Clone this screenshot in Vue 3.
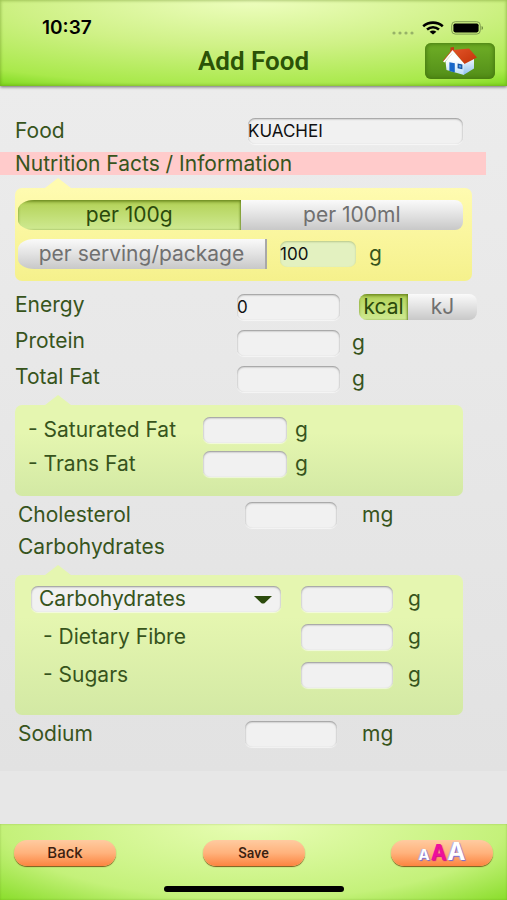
<script setup>
import { ref, reactive } from 'vue';

const basis = ref('100g');
const energyUnit = ref('kcal');
const carbType = ref('Carbohydrates');

const food = reactive({
    name: 'KUACHEI',
    serving: '100',
    energy: '0',
    protein: '',
    totalFat: '',
    saturatedFat: '',
    transFat: '',
    cholesterol: '',
    carbs: '',
    fibre: '',
    sugars: '',
    sodium: ''
});

const mainRows = [
    { key: 'protein', label: 'Protein' },
    { key: 'totalFat', label: 'Total Fat' }
];
const fatRows = [
    { key: 'saturatedFat', label: '- Saturated Fat' },
    { key: 'transFat', label: '- Trans Fat' }
];
const carbRows = [
    { key: 'fibre', label: '- Dietary Fibre' },
    { key: 'sugars', label: '- Sugars' }
];
</script>

<template>
    <div class="page">
        <header class="top-bar">
            <div class="status">
                <span class="time">10:37</span>
                <div class="status-icons">
                    <svg class="dots" width="24" height="12" viewBox="0 0 24 12">
                        <circle v-for="n in 4" :key="n" :cx="n * 6 - 3" cy="8" r="1.6" />
                    </svg>
                    <svg width="22" height="14" viewBox="0 0 22 14">
                        <g fill="none" stroke="#000" stroke-width="2.6">
                            <path d="M1.2 5.2C6.8 0.4 15.2 0.4 20.8 5.2" />
                            <path d="M5 8.6C8.6 5.6 13.4 5.6 17 8.6" />
                        </g>
                        <path d="M7.6 10.8C9.8 9.2 12.2 9.2 14.4 10.8L11 13.6Z" />
                    </svg>
                    <svg width="33" height="14" viewBox="0 0 33 14">
                        <rect x="0.7" y="0.7" width="28.6" height="12.4" rx="3.6" fill="none" stroke="#7f9a50" />
                        <rect x="2.4" y="2.4" width="25.2" height="9" rx="1.8" />
                        <path d="M30.6 5C32.4 5.6 32.4 8.4 30.6 9Z" fill="#66803a" />
                    </svg>
                </div>
            </div>
            <div class="title-row">
                <h1>Add Food</h1>
                <button class="home" type="button" aria-label="Home">
                    <svg width="36" height="30" viewBox="0 0 36 30">
                        <defs>
                            <linearGradient id="wallFront" x1="0" y1="0" x2="0" y2="1">
                                <stop offset="0.3" stop-color="#ffffff" />
                                <stop offset="1" stop-color="#b9dcf8" />
                            </linearGradient>
                            <linearGradient id="wallSide" x1="0" y1="0" x2="0" y2="1">
                                <stop offset="0" stop-color="#f2f8ff" />
                                <stop offset="1" stop-color="#8fc0ee" />
                            </linearGradient>
                            <linearGradient id="roof" x1="0" y1="0" x2="1" y2="1">
                                <stop offset="0" stop-color="#e2542a" />
                                <stop offset="1" stop-color="#c23206" />
                            </linearGradient>
                        </defs>
                        <path d="M8.4 1.6L12 1V6L8.4 9Z" fill="#c43a16" />
                        <path d="M3.5 15.5L10.6 7L22 17V29L4.5 24Z" fill="url(#wallFront)" />
                        <path d="M21.5 17L32 12.5V22.5L21.5 29Z" fill="url(#wallSide)" />
                        <path d="M10.4 4L27 2.4L35 11.6L22.4 18Z" fill="url(#roof)" />
                        <path d="M10.4 4L22.4 18L20.8 18.4L10.4 7.4L2.4 16.4L1 15.4Z" fill="#fbfdff" />
                        <path d="M10.4 4L1 15.4L1 14.6L10.2 3.2Z" fill="#d8481e" />
                        <path d="M7.4 16.2L12.8 17.2V26.4L7.4 25Z" fill="#1766c8" />
                        <path d="M15.6 17.6L20.4 18.6V23.2L15.6 22.2Z" fill="#14509e" />
                        <path d="M16.8 19L19.2 19.5V21.8L16.8 21.3Z" fill="#4f9be6" />
                    </svg>
                </button>
            </div>
        </header>

        <main>
            <form class="facts" @submit.prevent>
                <div class="row food-row">
                    <label for="name">Food</label>
                    <input id="name" v-model="food.name" type="text">
                </div>

                <h2>Nutrition Facts / Information</h2>

                <div class="panel yellow">
                    <div class="segment wide">
                        <button type="button" :class="{ on: basis == '100g' }" @click="basis = '100g'">per 100g</button>
                        <button type="button" :class="{ on: basis == '100ml' }" @click="basis = '100ml'">per 100ml</button>
                    </div>
                    <div class="serving-row">
                        <div class="segment serving">
                            <button type="button" :class="{ on: basis == 'serving' }" @click="basis = 'serving'">per serving/package</button>
                        </div>
                        <input id="serving" v-model="food.serving" class="tinted" type="text" aria-label="Serving size">
                        <span class="unit">g</span>
                    </div>
                </div>

                <div class="row">
                    <label for="energy">Energy</label>
                    <input id="energy" v-model="food.energy" type="text">
                    <div class="segment energy">
                        <button type="button" :class="{ on: energyUnit == 'kcal' }" @click="energyUnit = 'kcal'">kcal</button>
                        <button type="button" :class="{ on: energyUnit == 'kJ' }" @click="energyUnit = 'kJ'">kJ</button>
                    </div>
                </div>
                <div v-for="row in mainRows" :key="row.key" class="row">
                    <label :for="row.key">{{ row.label }}</label>
                    <input :id="row.key" v-model="food[row.key]" type="text">
                    <span class="unit">g</span>
                </div>

                <div class="panel green fat">
                    <div v-for="row in fatRows" :key="row.key" class="panel-row">
                        <label :for="row.key">{{ row.label }}</label>
                        <input :id="row.key" v-model="food[row.key]" type="text">
                        <span class="unit">g</span>
                    </div>
                </div>

                <div class="row minor">
                    <label for="cholesterol">Cholesterol</label>
                    <input id="cholesterol" v-model="food.cholesterol" type="text">
                    <span class="unit">mg</span>
                </div>
                <div class="row minor">
                    <label for="carbs">Carbohydrates</label>
                </div>

                <div class="panel green carbs">
                    <div class="panel-row">
                        <div class="picker">
                            <select v-model="carbType" aria-label="Carbohydrate type">
                                <option>Carbohydrates</option>
                                <option>Net Carbs</option>
                            </select>
                            <svg width="18" height="8" viewBox="0 0 18 8">
                                <path d="M0 0H18L10.5 7.2Q9 8 7.5 7.2Z" />
                            </svg>
                        </div>
                        <input id="carbs" v-model="food.carbs" type="text">
                        <span class="unit">g</span>
                    </div>
                    <div v-for="row in carbRows" :key="row.key" class="panel-row">
                        <label :for="row.key">{{ row.label }}</label>
                        <input :id="row.key" v-model="food[row.key]" type="text">
                        <span class="unit">g</span>
                    </div>
                </div>

                <div class="row minor">
                    <label for="sodium">Sodium</label>
                    <input id="sodium" v-model="food.sodium" type="text">
                    <span class="unit">mg</span>
                </div>
            </form>
        </main>

        <footer class="bottom-bar">
            <div class="actions">
                <button class="pill" type="button">Back</button>
                <button class="pill save" type="button">Save</button>
                <button class="pill sizes" type="button" aria-label="Text size">
                    <span class="small">A</span><span class="medium">A</span><span class="large">A</span>
                </button>
            </div>
            <div class="home-bar"></div>
        </footer>
    </div>
</template>

<style>
body {
    margin: 0;
    background: #e7e7e7;
}
</style>

<style scoped>
.page {
    display: flex;
    flex-direction: column;
    min-height: 100vh;
    color: #37541c;
    font-family: Inter, "Liberation Sans", sans-serif;
    font-size: 21px;
    line-height: 22px;
}

button, input, select {
    box-sizing: border-box;
    margin: 0;
    border: 0;
    padding: 0;
    color: inherit;
    font: inherit;
}

/* Bars */
.top-bar, .bottom-bar {
    box-sizing: border-box;
}

.top-bar {
    position: relative;
    height: 86px;
    padding-top: 17px;
    background: radial-gradient(ellipse 110% 130% at 50% 0, #eefebf, #cff186 42%, #a9e94b 77%, #7cd91c 90%);
    box-shadow: 0 1px 3px rgba(0, 0, 0, 0.55), inset 0 0 3px 1px rgba(90, 130, 20, 0.4);
}

.status {
    display: flex;
    justify-content: space-between;
    align-items: center;
    height: 22px;
    padding: 0 23px 0 42px;
}

.time {
    color: #000;
    font-size: 19px;
    font-weight: 600;
}

.status-icons {
    display: flex;
    align-items: center;
    gap: 7px;
}

.dots {
    fill: #97b268;
    margin-top: 6px;
}

.title-row {
    display: grid;
    grid-template-columns: 1fr auto 1fr;
    align-items: center;
    margin-top: 4px;
    padding: 0 12px;
}

h1 {
    grid-column: 2;
    margin: 0;
    color: #2b5207;
    font-family: Roboto, "Liberation Sans", sans-serif;
    font-size: 26px;
    font-weight: 600;
    line-height: 36px;
}

.home {
    display: grid;
    place-items: center;
    justify-self: end;
    width: 70px;
    height: 36px;
    border-radius: 6px;
    background: linear-gradient(#6fae26, #528e18);
    box-shadow: inset 0 0 4px 1px #46780f;
}

/* Form */
main {
    flex: 1;
}

.facts {
    padding: 32px 0 18px;
    background: linear-gradient(#ececec, #e2e2e2);
}

.row {
    display: grid;
    grid-template-columns: 1fr 103px 155px;
    column-gap: 12px;
    align-items: center;
    min-height: 26px;
    margin-bottom: 10px;
    padding-left: 15px;
}

.row label {
    align-self: start;
}

.row.food-row {
    grid-template-columns: 1fr 215px;
    margin-bottom: 8px;
    padding-right: 44px;
}

.food-row label, .minor label {
    align-self: center;
}

.row.minor {
    grid-template-columns: 1fr 92px 145px;
    column-gap: 25px;
    margin-bottom: 6px;
    padding-left: 18px;
}

input, select {
    width: 100%;
    height: 26px;
    border-radius: 7px;
    background: #f1f1f1;
    box-shadow: inset 0 1px 2px rgba(0, 0, 0, 0.4), 0 1px 1px rgba(255, 255, 255, 0.6);
}

input {
    color: #111;
    font-size: 17px;
}

h2 {
    margin: 0 21px 13px 0;
    padding-left: 15px;
    background: #ffcbcb;
    font-size: 21px;
    font-weight: 400;
    line-height: 23px;
}

.panel {
    position: relative;
    margin: 0 44px 6px 15px;
    border-radius: 7px;
}

.panel::before {
    content: '';
    position: absolute;
    left: 30px;
    bottom: 100%;
    border: solid transparent;
    border-width: 0 13px 10px;
}

.yellow {
    margin: 0 35px 13px 15px;
    padding: 12px 9px 12px 3px;
    background: linear-gradient(#fffbb0, #f5f18c);
}

.yellow::before {
    border-bottom-color: #fffbb0;
}

.green {
    background: linear-gradient(#e5f6b0 30%, #d3e9a4);
}

.green::before {
    border-bottom-color: #e5f6b0;
}

.panel-row {
    display: grid;
    grid-template-columns: 1fr 84px 168px;
    column-gap: 8px;
    align-items: center;
}

.fat {
    display: grid;
    gap: 8px;
    margin-top: 13px;
    padding: 12px 0 19px 13px;
}

.carbs {
    display: grid;
    gap: 12px;
    margin-top: 15px;
    padding: 11px 0 27px 16px;
}

.carbs .panel-row {
    grid-template-columns: 1fr 92px 55px;
    column-gap: 15px;
}

.carbs label {
    padding-left: 12px;
}

.picker {
    display: flex;
    position: relative;
    margin-right: 5px;
}

.picker select {
    appearance: none;
    padding: 0 36px 0 8px;
}

.picker svg {
    position: absolute;
    top: 10px;
    right: 9px;
    fill: #2b4a0c;
    pointer-events: none;
}

/* Segmented buttons */
.segment {
    display: flex;
    height: 30px;
    border-radius: 8px;
    overflow: hidden;
}

.segment.wide {
    border-radius: 16px 8px 8px 16px / 10px 8px 8px 10px;
}

.segment button {
    flex: 1;
    background: linear-gradient(#fafafa, #e2e2e2 50%, #c8c8c8);
    color: #707070;
    white-space: nowrap;
}

.segment button.on {
    background: linear-gradient(#b2d155, #cfea92);
    box-shadow: inset 0 2px 3px rgba(80, 110, 10, 0.6), inset -1px 0 2px rgba(80, 110, 10, 0.5);
    color: #2b4a0c;
}

.serving-row {
    display: grid;
    grid-template-columns: 1fr 76px 94px;
    column-gap: 13px;
    align-items: center;
    margin-top: 9px;
}

.segment.serving {
    border-right: 2px solid #a8a8a8;
    border-radius: 16px 0 0 16px / 10px 0 0 10px;
}

.tinted {
    background: #e3f1c0;
    box-shadow: inset 0 1px 2px rgba(120, 140, 60, 0.4);
}

.segment.energy {
    width: 118px;
    height: 26px;
    margin-left: 7px;
}

.segment.energy button {
    flex: 0 0 49px;
}

.segment.energy button + button {
    flex: 0 0 69px;
}

/* Footer */
.bottom-bar {
    display: flex;
    flex-direction: column;
    justify-content: space-between;
    align-items: center;
    height: 76px;
    padding: 16px 0 8px;
    background: radial-gradient(ellipse 90% 180% at 50% 0, #e8fdb4, #c4f17a 55%, #86dc26 80%);
    box-shadow: inset 0 0 2px rgba(90, 130, 20, 0.4);
}

.actions {
    display: flex;
    justify-content: space-between;
    box-sizing: border-box;
    width: 100%;
    padding: 0 14px;
}

.pill {
    width: 102px;
    height: 26px;
    border-radius: 13px;
    background: linear-gradient(#ffcba0, #ffb27c 50%, #fc8440);
    box-shadow: 0 1px 1px #7a5a1c;
    color: #3a2010;
    font-size: 15px;
    font-weight: 500;
    line-height: 24px;
}

.pill.save {
    font-family: Roboto, "Liberation Sans", sans-serif;
    font-size: 14px;
}

.pill.sizes {
    display: flex;
    justify-content: center;
    align-items: baseline;
    gap: 1px;
    color: #fff;
    font-weight: 700;
    text-shadow: 1px 1px 1px #7068d8, -1px 0 1px #b0a8f0;
}

.small {
    font-size: 15px;
}

.medium {
    color: #ee0f9c;
    font-size: 21px;
    text-shadow: 1px 1px 1px #d01088;
}

.large {
    font-size: 24px;
}

.home-bar {
    width: 180px;
    height: 6px;
    border-radius: 3px;
    background: #000;
}
</style>
